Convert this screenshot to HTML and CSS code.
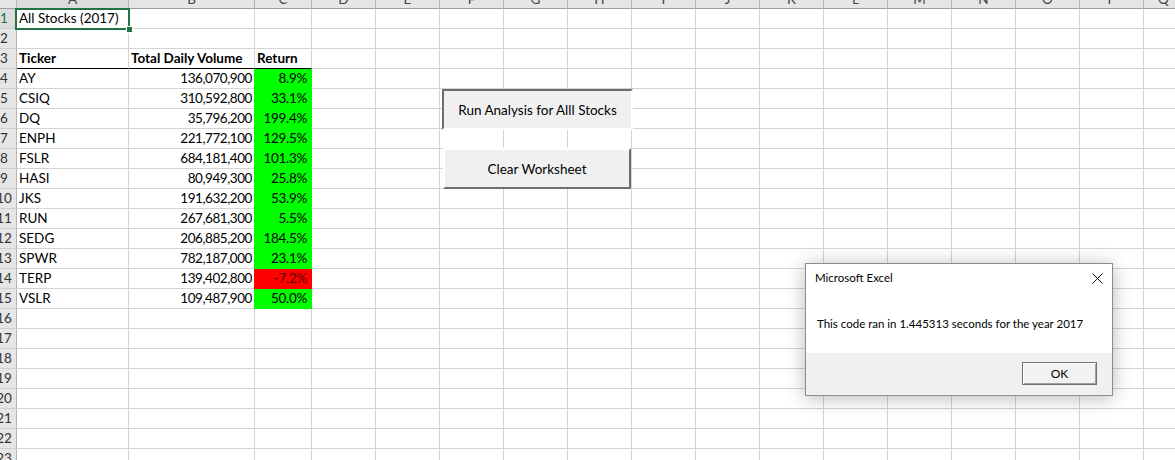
FILE: index.html
```html
<!DOCTYPE html>
<html lang="en">
<head>
<meta charset="utf-8">
<title>All Stocks (2017)</title>
<link rel="stylesheet" href="styles.css">
</head>
<body>
<div class="sheet">
  <div class="row hdr">
    <div class="corner"></div><div class="ch-sel"><span>A</span></div><div><span>B</span></div><div><span>C</span></div><div><span>D</span></div><div><span>E</span></div><div><span>F</span></div><div><span>G</span></div><div><span>H</span></div><div><span>I</span></div><div><span>J</span></div><div><span>K</span></div><div><span>L</span></div><div><span>M</span></div><div><span>N</span></div><div><span>O</span></div><div><span>P</span></div><div><span>Q</span></div>
  </div>
  <div class="row">
    <div class="rh rh-sel"><span>1</span></div><div class="active">All Stocks (2017)<span class="sel"><span class="handle"></span></span></div><div></div><div></div><div></div><div></div><div></div><div></div><div></div><div></div><div></div><div></div><div></div><div></div><div></div><div></div><div></div><div></div>
  </div>
  <div class="row">
    <div class="rh"><span>2</span></div><div></div><div></div><div></div><div></div><div></div><div></div><div></div><div></div><div></div><div></div><div></div><div></div><div></div><div></div><div></div><div></div><div></div>
  </div>
  <div class="row">
    <div class="rh"><span>3</span></div><div class="th">Ticker</div><div class="th">Total Daily Volume</div><div class="th">Return</div><div></div><div></div><div></div><div></div><div></div><div></div><div></div><div></div><div></div><div></div><div></div><div></div><div></div><div></div>
  </div>
  <div class="row">
    <div class="rh"><span>4</span></div><div>AY</div><div class="num">136,070,900</div><div class="pct">8.9%</div><div></div><div></div><div></div><div></div><div></div><div></div><div></div><div></div><div></div><div></div><div></div><div></div><div></div><div></div>
  </div>
  <div class="row">
    <div class="rh"><span>5</span></div><div>CSIQ</div><div class="num">310,592,800</div><div class="pct">33.1%</div><div></div><div></div><div></div><div></div><div></div><div></div><div></div><div></div><div></div><div></div><div></div><div></div><div></div><div></div>
  </div>
  <div class="row">
    <div class="rh"><span>6</span></div><div>DQ</div><div class="num">35,796,200</div><div class="pct">199.4%</div><div></div><div></div><div></div><div></div><div></div><div></div><div></div><div></div><div></div><div></div><div></div><div></div><div></div><div></div>
  </div>
  <div class="row">
    <div class="rh"><span>7</span></div><div>ENPH</div><div class="num">221,772,100</div><div class="pct">129.5%</div><div></div><div></div><div></div><div></div><div></div><div></div><div></div><div></div><div></div><div></div><div></div><div></div><div></div><div></div>
  </div>
  <div class="row">
    <div class="rh"><span>8</span></div><div>FSLR</div><div class="num">684,181,400</div><div class="pct">101.3%</div><div></div><div></div><div></div><div></div><div></div><div></div><div></div><div></div><div></div><div></div><div></div><div></div><div></div><div></div>
  </div>
  <div class="row">
    <div class="rh"><span>9</span></div><div>HASI</div><div class="num">80,949,300</div><div class="pct">25.8%</div><div></div><div></div><div></div><div></div><div></div><div></div><div></div><div></div><div></div><div></div><div></div><div></div><div></div><div></div>
  </div>
  <div class="row">
    <div class="rh"><span>10</span></div><div>JKS</div><div class="num">191,632,200</div><div class="pct">53.9%</div><div></div><div></div><div></div><div></div><div></div><div></div><div></div><div></div><div></div><div></div><div></div><div></div><div></div><div></div>
  </div>
  <div class="row">
    <div class="rh"><span>11</span></div><div>RUN</div><div class="num">267,681,300</div><div class="pct">5.5%</div><div></div><div></div><div></div><div></div><div></div><div></div><div></div><div></div><div></div><div></div><div></div><div></div><div></div><div></div>
  </div>
  <div class="row">
    <div class="rh"><span>12</span></div><div>SEDG</div><div class="num">206,885,200</div><div class="pct">184.5%</div><div></div><div></div><div></div><div></div><div></div><div></div><div></div><div></div><div></div><div></div><div></div><div></div><div></div><div></div>
  </div>
  <div class="row">
    <div class="rh"><span>13</span></div><div>SPWR</div><div class="num">782,187,000</div><div class="pct">23.1%</div><div></div><div></div><div></div><div></div><div></div><div></div><div></div><div></div><div></div><div></div><div></div><div></div><div></div><div></div>
  </div>
  <div class="row">
    <div class="rh"><span>14</span></div><div>TERP</div><div class="num">139,402,800</div><div class="pct neg">-7.2%</div><div></div><div></div><div></div><div></div><div></div><div></div><div></div><div></div><div></div><div></div><div></div><div></div><div></div><div></div>
  </div>
  <div class="row">
    <div class="rh"><span>15</span></div><div>VSLR</div><div class="num">109,487,900</div><div class="pct">50.0%</div><div></div><div></div><div></div><div></div><div></div><div></div><div></div><div></div><div></div><div></div><div></div><div></div><div></div><div></div>
  </div>
  <div class="row">
    <div class="rh"><span>16</span></div><div></div><div></div><div></div><div></div><div></div><div></div><div></div><div></div><div></div><div></div><div></div><div></div><div></div><div></div><div></div><div></div><div></div>
  </div>
  <div class="row">
    <div class="rh"><span>17</span></div><div></div><div></div><div></div><div></div><div></div><div></div><div></div><div></div><div></div><div></div><div></div><div></div><div></div><div></div><div></div><div></div><div></div>
  </div>
  <div class="row">
    <div class="rh"><span>18</span></div><div></div><div></div><div></div><div></div><div></div><div></div><div></div><div></div><div></div><div></div><div></div><div></div><div></div><div></div><div></div><div></div><div></div>
  </div>
  <div class="row">
    <div class="rh"><span>19</span></div><div></div><div></div><div></div><div></div><div></div><div></div><div></div><div></div><div></div><div></div><div></div><div></div><div></div><div></div><div></div><div></div><div></div>
  </div>
  <div class="row">
    <div class="rh"><span>20</span></div><div></div><div></div><div></div><div></div><div></div><div></div><div></div><div></div><div></div><div></div><div></div><div></div><div></div><div></div><div></div><div></div><div></div>
  </div>
  <div class="row">
    <div class="rh"><span>21</span></div><div></div><div></div><div></div><div></div><div></div><div></div><div></div><div></div><div></div><div></div><div></div><div></div><div></div><div></div><div></div><div></div><div></div>
  </div>
  <div class="row">
    <div class="rh"><span>22</span></div><div></div><div></div><div></div><div></div><div></div><div></div><div></div><div></div><div></div><div></div><div></div><div></div><div></div><div></div><div></div><div></div><div></div>
  </div>
  <div class="row">
    <div class="rh"><span>23</span></div><div></div><div></div><div></div><div></div><div></div><div></div><div></div><div></div><div></div><div></div><div></div><div></div><div></div><div></div><div></div><div></div><div></div>
  </div>
</div>

<div class="btn btn-run">Run Analysis for Alll Stocks</div>
<div class="btn btn-clear">Clear Worksheet</div>

<div class="dialog">
  <div class="dlg-title">
    <span>Microsoft Excel</span>
    <svg class="close" width="11" height="11" viewBox="0 0 11 11"><path d="M0.5 0.5 L10.5 10.5 M10.5 0.5 L0.5 10.5" stroke="#111" stroke-width="1" fill="none"/></svg>
  </div>
  <div class="dlg-body">This code ran in 1.445313 seconds for the year 2017</div>
  <div class="dlg-foot"><div class="ok">OK</div></div>
</div>
</body>
</html>
```

FILE: styles.css
```css
html, body {
  margin: 0;
  padding: 0;
  background: #fff;
  overflow: hidden;
}

body {
  position: relative;
  width: 1175px;
  height: 460px;
  font-family: Lato, "Liberation Sans", sans-serif;
  font-size: 13.5px;
  color: #000;
}

.sheet {
  display: flex;
  flex-direction: column;
}

.row {
  display: grid;
  grid-template-columns: 17px 112px 126px 57px repeat(13, 64px) 40px;
  height: 20px;
  flex: 0 0 auto;
}

.row > div {
  box-sizing: border-box;
  border-right: 1px solid #d4d4d4;
  border-bottom: 1px solid #d4d4d4;
  white-space: nowrap;
  line-height: 19px;
  padding: 0 2px;
}

/* column header strip */
.row.hdr {
  height: 9px;
}

.row.hdr > div {
  background: #e6e6e6;
  border-right-color: #b4b4b4;
  border-bottom-color: #9e9e9e;
  overflow: hidden;
  text-align: center;
  color: #444;
  padding: 0;
}

.row.hdr > .ch-sel {
  background: #dcdcdc;
  border-bottom-color: #217346;
}

.hdr span {
  display: block;
  margin-top: -10px;
}

/* row headers */
.row > .rh {
  background: #e6e6e6;
  border-right-color: #b4b4b4;
  border-bottom-color: #cfcfcf;
  padding: 0;
  display: flex;
  justify-content: flex-end;
  overflow: hidden;
  color: #333;
}

.row > .rh-sel {
  background: #dcdcdc;
  color: #217346;
  border-right-color: #217346;
}

.rh span {
  flex: 0 0 24px;
  text-align: center;
}

/* cells */
.row > .th {
  font-weight: 700;
  border-bottom-color: #000;
}

.row > .num {
  text-align: right;
  padding-right: 2px;
  letter-spacing: -0.45px;
}

.row > .pct {
  text-align: right;
  padding-right: 4px;
  letter-spacing: -0.3px;
  background: #00ff00;
  border-right-color: #00ff00;
  border-bottom-color: #00ff00;
  box-shadow: -1px 0 0 #00ff00;
}

.row > .neg {
  background: #ff0000;
  border-right-color: #ff0000;
  border-bottom-color: #ff0000;
  box-shadow: -1px 0 0 #ff0000;
  color: #5a0000;
}

/* active cell selection */
.row > .active {
  position: relative;
}

.sel {
  position: absolute;
  left: -2px;
  top: -1px;
  right: -2px;
  bottom: -2px;
  border: 2px solid #217346;
}

.handle {
  position: absolute;
  right: -5px;
  bottom: -5px;
  width: 7px;
  height: 7px;
  box-sizing: border-box;
  background: #217346;
  border: 1px solid #fff;
}

/* form buttons on the sheet */
.btn {
  position: absolute;
  box-sizing: border-box;
  background: #f0f0f0;
  display: flex;
  align-items: center;
  justify-content: center;
  color: #000;
  font-size: 13.5px;
}

.btn-run {
  left: 442px;
  top: 89px;
  width: 191px;
  height: 41px;
  border-top: 2px solid #6e6e6e;
  border-left: 2px solid #6e6e6e;
  border-right: 2px solid #fff;
  border-bottom: 2px solid #fff;
  padding-top: 1px;
}

.btn-clear {
  left: 443px;
  top: 148px;
  width: 188px;
  height: 41px;
  border-top: 2px solid #fff;
  border-left: 2px solid #fff;
  border-right: 2px solid #6e6e6e;
  border-bottom: 2px solid #6e6e6e;
}

/* message box */
.dialog {
  position: absolute;
  left: 805px;
  top: 263px;
  width: 308px;
  height: 133px;
  box-sizing: border-box;
  border: 1px solid #8c8c8c;
  background: #fff;
  box-shadow: 0 2px 18px rgba(0, 0, 0, 0.28);
  display: flex;
  flex-direction: column;
  font-size: 11.5px;
  color: #000;
}

.dlg-title {
  height: 28px;
  flex: 0 0 28px;
  display: flex;
  align-items: center;
  justify-content: space-between;
  padding: 0 9px 0 9px;
  line-height: 16px;
}

.close {
  display: block;
}

.dlg-body {
  flex: 0 0 61px;
  box-sizing: border-box;
  padding: 24px 0 0 11px;
  line-height: 16px;
}

.dlg-foot {
  flex: 1 1 auto;
  background: #f0f0f0;
  display: flex;
  justify-content: flex-end;
  align-items: flex-start;
  padding: 9px 15px 0 0;
}

.ok {
  width: 75px;
  height: 23px;
  box-sizing: border-box;
  border: 1px solid #707070;
  background: #f2f2f2;
  box-shadow: inset 1px 1px 0 #fff, inset -1px -1px 0 #a0a0a0;
  text-align: center;
  line-height: 21px;
  font-size: 12px;
}
```
